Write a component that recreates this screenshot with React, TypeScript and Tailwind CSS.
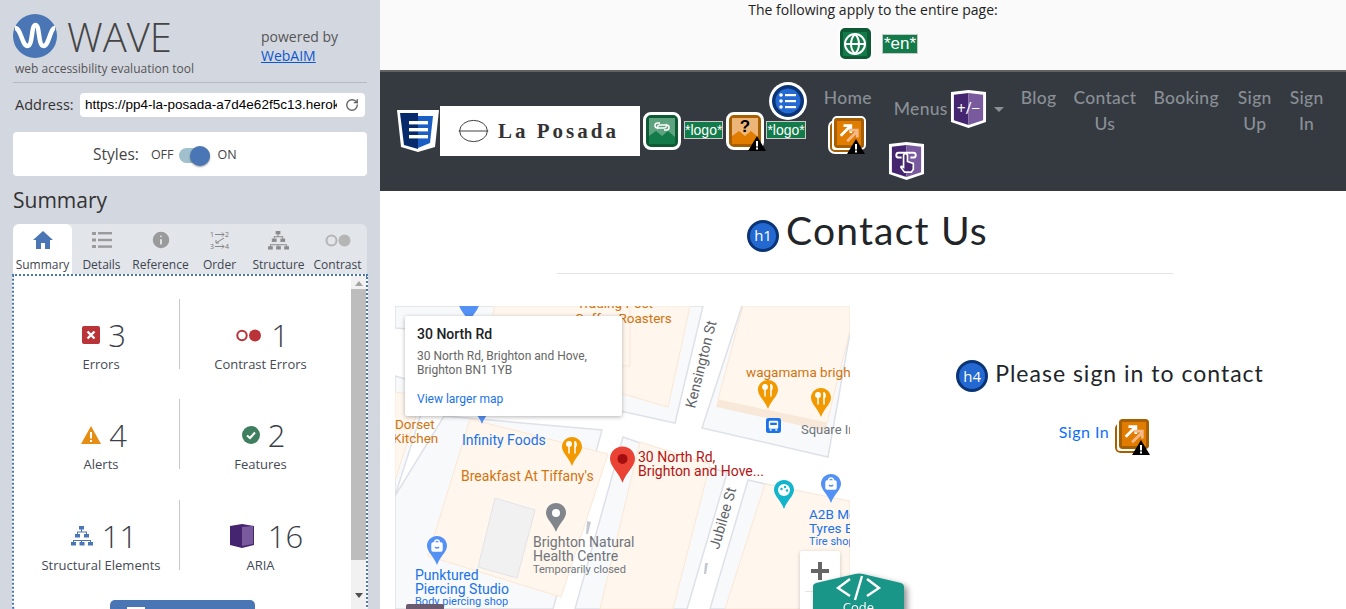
import React from "react";
import { RotateCw, Globe, Info } from "lucide-react";

const JOSEFIN = "font-['Lato',sans-serif]";

// small white-framed badge used by the WAVE overlay
function Frame({ bg, inner, children }: { bg: string; inner: string; children: React.ReactNode }) {
  return (
    <span className={`relative inline-flex h-[38px] w-[38px] shrink-0 items-center justify-center rounded-[8px] border-[3px] border-white ${bg}`}>
      <span className={`flex h-[26px] w-[26px] items-center justify-center ${inner}`}>{children}</span>
    </span>
  );
}

function WarnTri({ className }: { className: string }) {
  return (
    <svg viewBox="0 0 18 15" className={`absolute h-[15px] w-[18px] ${className}`}>
      <path d="M9 0 18 15H0Z" fill="#000" />
      <rect x="8" y="5" width="2" height="5.5" fill="#fff" />
      <rect x="8" y="11.5" width="2" height="2" fill="#fff" />
    </svg>
  );
}

function Shield({ size = 38, children }: { size?: number; children?: React.ReactNode }) {
  return (
    <svg viewBox="0 0 38 40" width={size} height={size * 40 / 38} className="shrink-0">
      <path d="M1 2 19 0 37 2V33L19 39 1 33Z" fill="#fff" />
      <path d="M4 5 19 3V36L4 31Z" fill="#45256f" />
      <path d="M19 3 34 5V31L19 36Z" fill="#7a5a9e" />
      {children}
    </svg>
  );
}

function Pin({ color, x, y, w = 20, h = 29, children }: { color: string; x: number; y: number; w?: number; h?: number; children?: React.ReactNode }) {
  return (
    <svg viewBox="0 0 20 29" className="absolute" width={w} height={h} style={{ left: x, top: y }}>
      <path d="M10 0C4.5 0 0 4.3 0 9.8 0 16 6.6 20 10 29 13.4 20 20 16 20 9.8 20 4.3 15.5 0 10 0Z" fill={color} />
      {children}
    </svg>
  );
}

const forkIcon = (
  <g stroke="#fff" strokeWidth="1.5" fill="none" strokeLinecap="round">
    <path d="M7 5v11" />
    <circle cx="7" cy="7" r="2.2" fill="#fff" />
    <path d="M13 5v11" />
    <path d="M13 5c1.6 1 1.6 4 0 5" />
  </g>
);

const bagIcon = (
  <g fill="none" stroke="#fff" strokeWidth="1.4">
    <rect x="5" y="7" width="10" height="8" rx="1" fill="#fff" />
    <path d="M7.5 7c0-4 5-4 5 0" />
    <path d="M8 11c1 1.4 3 1.4 4 0" stroke="#5491f5" />
  </g>
);

function MapLabel({ x, y, className, children }: { x: number; y: number; className: string; children: React.ReactNode }) {
  return (
    <div className={`absolute font-['Roboto',sans-serif] whitespace-nowrap ${className}`} style={{ left: x, top: y }}>
      {children}
    </div>
  );
}

function MapPanel() {
  return (
    <div className="relative h-[303px] w-[455px] shrink-0 overflow-hidden bg-white">
      <svg viewBox="0 0 455 303" className="absolute inset-0 h-full w-full">
        <g fill="#f8f9fb" stroke="#dfe1e8" strokeWidth="1.5">
          <path d="M49 110 207 124 158 303H0V190Z" />
          <path d="M347 0H455V27L433 151 307 122Z" />
          <path d="M225 0H308L280 117 225 105Z" />
          <path d="M228 131 332 167 292 303H180Z" />
          <path d="M353 174 455 197V303H315Z" />
          <path d="M0 0H100V30L0 22Z" />
          <path d="M0 70 35 80 0 190Z" />
        </g>
        <g fill="#fff6ee" stroke="#fbe7d4">
          <path d="M75 113 213 148 166 291 33 250Z" />
          <path d="M348 0H455V24L432 117 323 94Z" />
          <path d="M225 0H295L273 101 225 87Z" />
          <path d="M245 136 315 158 278 303H205Z" />
          <path d="M370 178 455 195V303H330Z" />
          <path d="M100 0H235V60H85Z" />
          <path d="M0 86 27 90 0 175Z" />
        </g>
        <path d="M323 94 432 117 431 125 321 101Z" fill="#f8e8d9" />
        <path d="M100 192 140 204 122 272 83 261Z" fill="#f1f1f1" stroke="#e2e3e6" />
        <path d="M192 215 196 216 193 228 191 228Z" fill="#c4c8d0" />
        <path d="M310 257 313 257 311 268 309 268Z" fill="#c4c8d0" />
      </svg>

      <Pin color="#5491f5" x={64} y={-12} />
      <Pin color="#5491f5" x={77} y={89} />
      <Pin color="#f29900" x={167} y={131}>{forkIcon}</Pin>
      <Pin color="#ea4335" x={215} y={140} w={25} h={37}>
        <circle cx="10" cy="10" r="4" fill="#a50e0e" />
      </Pin>
      <Pin color="#80868b" x={151} y={197}>
        <circle cx="10" cy="10" r="4" fill="#fff" />
      </Pin>
      <Pin color="#5491f5" x={32} y={230}>{bagIcon}</Pin>
      <Pin color="#f29900" x={363} y={74}>{forkIcon}</Pin>
      <Pin color="#f29900" x={416} y={82}>{forkIcon}</Pin>
      <Pin color="#12b5cb" x={379} y={174}>
        <circle cx="10" cy="10" r="6" fill="#fff" />
        <circle cx="7.5" cy="9" r="1.2" fill="#12b5cb" />
        <circle cx="11" cy="7" r="1.2" fill="#12b5cb" />
        <circle cx="13" cy="10.5" r="1.2" fill="#12b5cb" />
      </Pin>
      <Pin color="#5491f5" x={426} y={168}>{bagIcon}</Pin>
      <svg viewBox="0 0 16 16" className="absolute left-[371px] top-[112px] h-[15px] w-[15px]">
        <rect width="16" height="16" rx="2.5" fill="#1a73e8" />
        <rect x="3" y="3" width="10" height="8.5" rx="1.5" fill="#fff" />
        <rect x="4.5" y="5" width="7" height="2.5" fill="#1a73e8" />
        <rect x="4" y="12" width="2" height="1.5" fill="#fff" />
        <rect x="10" y="12" width="2" height="1.5" fill="#fff" />
      </svg>

      <MapLabel x={182} y={-10} className="text-[13.5px] leading-[14px] text-[#d0740f]">Trading Post</MapLabel>
      <MapLabel x={180} y={5} className="text-[13.5px] leading-[14px] text-[#d0740f]">Coffee Roasters</MapLabel>
      <MapLabel x={0} y={111} className="text-[13.5px] leading-[14px] text-[#d0740f]">Dorset</MapLabel>
      <MapLabel x={-2} y={125} className="text-[13.5px] leading-[14px] text-[#d0740f]">Kitchen</MapLabel>
      <MapLabel x={67} y={127} className="text-[14px] leading-[14px] text-[#1a73e8]">Infinity Foods</MapLabel>
      <MapLabel x={66} y={163} className="text-[14px] leading-[14px] text-[#d0740f]">Breakfast At Tiffany's</MapLabel>
      <MapLabel x={243} y={144} className="text-[14px] leading-[14px] text-[#b31412]">
        30 North Rd,<br />Brighton and Hove...
      </MapLabel>
      <MapLabel x={138} y={229} className="text-[14px] leading-[14px] text-[#70757a]">
        Brighton Natural<br />Health Centre
      </MapLabel>
      <MapLabel x={138} y={257} className="text-[11px] leading-[13px] text-[#70757a]">Temporarily closed</MapLabel>
      <MapLabel x={20} y={262} className="text-[14px] leading-[14px] text-[#1a73e8]">
        Punktured<br />Piercing Studio
      </MapLabel>
      <MapLabel x={20} y={289} className="text-[11px] leading-[13px] text-[#1a73e8]">Body piercing shop</MapLabel>
      <MapLabel x={351} y={59} className="text-[13.5px] leading-[14px] text-[#d0740f]">wagamama brighton</MapLabel>
      <MapLabel x={406} y={117} className="text-[13px] leading-[14px] text-[#70757a]">Square Inn</MapLabel>
      <MapLabel x={414} y={201} className="text-[13.5px] leading-[14px] text-[#1a73e8]">
        A2B Motors<br />Tyres Brighton
      </MapLabel>
      <MapLabel x={414} y={229} className="text-[11px] leading-[13px] text-[#1a73e8]">Tire shop</MapLabel>
      <MapLabel x={296} y={95} className="origin-left -rotate-[76deg] text-[14.5px] leading-[14px] text-[#5f6368]">Kensington St</MapLabel>
      <MapLabel x={320} y={236} className="origin-left -rotate-[74deg] text-[14.5px] leading-[14px] text-[#5f6368]">Jubilee St</MapLabel>

      {/* info window */}
      <div className="absolute left-[10px] top-[10px] flex h-[100px] w-[217px] flex-col rounded-[2px] bg-white px-3 pt-[10px] font-['Roboto',sans-serif] shadow-[0_1px_4px_rgba(0,0,0,0.3)]">
        <div className="text-[14px] font-medium leading-[16px] text-[#202124]">30 North Rd</div>
        <div className="mt-[7px] text-[12px] leading-[14px] text-[#666]">
          30 North Rd, Brighton and Hove,
          <br />
          Brighton BN1 1YB
        </div>
        <div className="mt-[15px] text-[12px] leading-[14px] text-[#1a73e8]">View larger map</div>
      </div>

      {/* zoom control */}
      <div className="absolute left-[405px] top-[245px] flex h-[80px] w-[40px] flex-col items-center rounded-[2px] bg-white shadow-[0_1px_4px_rgba(0,0,0,0.2)]">
        <svg viewBox="0 0 18 18" className="mt-[11px] h-[18px] w-[18px]">
          <path d="M7 0h4v7h7v4h-7v7H7v-7H0V7h7Z" fill="#666" />
        </svg>
        <div className="mt-[11px] h-px w-[30px] bg-[#e6e6e6]" />
      </div>

      <div className="absolute left-[11px] top-[298px] h-[10px] w-[38px] rounded-[2px] bg-[#6a5a70]" />
    </div>
  );
}

function Stat({ icon, n, label, gap, className }: { icon: React.ReactNode; n: string; label: string; gap: string; className: string }) {
  return (
    <div className={`flex h-[70px] flex-col items-center pt-[16px] ${className}`}>
      <div className={`flex h-[40px] shrink-0 items-center ${gap}`}>
        {icon}
        <span className="text-[31px] font-light leading-[40px] text-[#3a3f4a]">{n}</span>
      </div>
      <div className="whitespace-nowrap text-[13px] leading-[18px] text-[#444a55]">{label}</div>
    </div>
  );
}

function Tab({ icon, label, active }: { icon: React.ReactNode; label: string; active?: boolean }) {
  return (
    <div className={`flex h-[51px] w-[59px] shrink-0 flex-col items-center rounded-t-[6px] pt-[4px] ${active ? "bg-white" : ""}`}>
      <div className="flex h-[24px] items-center justify-center">{icon}</div>
      <div className="mt-[5px] whitespace-nowrap text-[12px] leading-[16px] text-[#3f4550]">{label}</div>
    </div>
  );
}

const treeIcon = (
  <>
    <rect x="8" y="0" width="5" height="3.5" /><rect x="4" y="8" width="5" height="3.5" /><rect x="13" y="8" width="5" height="3.5" />
    <rect x="0" y="16" width="5" height="3.5" /><rect x="8.5" y="16" width="5" height="3.5" /><rect x="17" y="16" width="5" height="3.5" />
    <path d="M10 3h1v2.5h5V8h-1V6.5H7V8H6V5.5h4ZM2 14h18v2h-1v-1h-8v1h-1v-1H3v1H2Z" />
  </>
);

function Sidebar() {
  return (
    <aside className="flex h-[609px] w-[380px] shrink-0 flex-col overflow-hidden bg-[#d3d7e0] pl-[13px] pr-[13px] font-['Open_Sans',sans-serif]">
      <div className="flex h-[83px] shrink-0 border-b border-[#b6b9bd]">
        <div className="w-[248px] shrink-0 pt-[14px]">
          <div className="flex h-[44px] items-center">
            <svg viewBox="0 0 44 44" className="h-[44px] w-[44px] shrink-0">
              <circle cx="22" cy="22" r="22" fill="#4a76b5" />
              <path d="M2 14C8 14 9 32 14.500 32 20 32 18 11 22.500 11 27 11 25 32 30.500 32 36 32 37 14 42 14" fill="none" stroke="#fff" strokeWidth="4.500" />
            </svg>
            <span className="ml-[10px] mt-[2px] font-['Open_Sans',sans-serif] text-[40px] font-light leading-[44px] text-[#444]">WAVE</span>
          </div>
          <div className="ml-[2px] mt-[2px] whitespace-nowrap text-[12px] leading-[18px] text-[#555]">web accessibility evaluation tool</div>
        </div>
        <div className="pt-[27px] text-[14px] leading-[19px] text-[#555]">
          <div>powered by</div>
          <div className="text-[#0b57d0] underline">WebAIM</div>
        </div>
      </div>

      <div className="mt-[10px] flex h-[24px] shrink-0 items-center pr-[2px]">
        <span className="ml-[2px] w-[65px] shrink-0 text-[14.5px] text-[#333]">Address:</span>
        <div className="flex h-[24px] flex-1 items-center rounded-[4px] bg-white pl-[5px] pr-[6px]">
          <span className="w-[252px] overflow-hidden whitespace-nowrap font-['Liberation_Sans',sans-serif] text-[13.5px] text-black">
            https://pp4-la-posada-a7d4e62f5c13.herokuapp.com
          </span>
          <RotateCw className="ml-auto h-[14px] w-[14px] text-[#666]" strokeWidth={2.4} />
        </div>
      </div>

      <div className="mt-[15px] flex h-[44px] shrink-0 items-center rounded-[4px] bg-white pl-[80px] pt-[2px]">
        <span className="text-[15.5px] text-[#444]">Styles:</span>
        <span className="ml-[12px] text-[12.5px] text-[#444]">OFF</span>
        <span className="relative ml-[5px] h-[15px] w-[31px] rounded-full bg-[#9fc0cc]">
          <span className="absolute -top-[2px] left-[11px] h-[20px] w-[20px] rounded-full bg-[#4a76b5] shadow-[0_1px_2px_rgba(0,0,0,0.4)]" />
        </span>
        <span className="ml-[8px] text-[12.5px] text-[#444]">ON</span>
      </div>

      <h2 className="mt-[9px] shrink-0 text-[21px] leading-[30px] text-[#333]">Summary</h2>

      <div className="mt-[9px] flex h-[51px] shrink-0 rounded-t-[6px] bg-[#e2e5ea]">
        <Tab active label="Summary" icon={
          <svg viewBox="0 0 20 18" className="h-[18px] w-[20px]" fill="#4a76b5">
            <path d="M10 0 20 9H17V18H12V12H8V18H3V9H0Z" />
          </svg>} />
        <Tab label="Details" icon={
          <svg viewBox="0 0 20 16" className="h-[16px] w-[20px]" fill="#9a9a9a">
            <rect x="0" y="0" width="4" height="3" /><rect x="6" y="0" width="14" height="2.4" />
            <rect x="0" y="6.5" width="4" height="3" /><rect x="6" y="6.8" width="14" height="2.4" />
            <rect x="0" y="13" width="4" height="3" /><rect x="6" y="13.4" width="14" height="2.4" />
          </svg>} />
        <Tab label="Reference" icon={<Info className="h-[22px] w-[22px] fill-[#9a9a9a] text-[#e2e5ea]" strokeWidth={2} />} />
        <Tab label="Order" icon={
          <svg viewBox="0 0 20 19" className="h-[19px] w-[20px]" fill="none" stroke="#888" strokeWidth="1">
            <text x="0" y="6" fontSize="7" fill="#777" stroke="none">1</text>
            <text x="15" y="6" fontSize="7" fill="#777" stroke="none">2</text>
            <text x="0" y="18" fontSize="7" fill="#777" stroke="none">3</text>
            <text x="15" y="18" fontSize="7" fill="#777" stroke="none">4</text>
            <path d="M5 3.5h9M12 1.5l2 2-2 2M14 7 6 12M6 9v3h3M5 15.5h9M12 13.5l2 2-2 2" />
          </svg>} />
        <Tab label="Structure" icon={
          <svg viewBox="0 0 22 20" className="h-[19px] w-[21px]" fill="#8a8a8a">{treeIcon}</svg>} />
        <Tab label="Contrast" icon={
          <svg viewBox="0 0 26 13" className="h-[13px] w-[26px]">
            <circle cx="6.5" cy="6.5" r="5" fill="none" stroke="#b5b5b5" strokeWidth="2" />
            <circle cx="19.5" cy="6.5" r="6" fill="#b5b5b5" />
          </svg>} />
      </div>

      {/* scrolling summary panel */}
      <div className="-mx-px -mt-px flex h-[340px] shrink-0 rounded-b-[8px] border-2 border-dotted border-[#4a76b5] bg-white">
        <div className="flex min-w-0 flex-1 flex-col items-center pl-[9px] pr-[10px] pt-[23px]">
          <div className="flex w-full">
            <Stat className="w-[156px] shrink-0" gap="gap-[8px] pl-[6px]" n="3" label="Errors" icon={
              <svg viewBox="0 0 18 18" className="h-[18px] w-[18px]">
                <rect width="18" height="18" rx="2" fill="#b93338" />
                <path d="M5.5 5.5 12.5 12.5M12.5 5.5 5.5 12.5" stroke="#fff" strokeWidth="2.4" />
              </svg>} />
            <div className="h-[70px] w-px bg-[#c8c8c8]" />
            <Stat className="flex-1" gap="gap-[10px] pl-[4px]" n="1" label="Contrast Errors" icon={
              <svg viewBox="0 0 25 13" className="h-[13px] w-[25px]">
                <circle cx="6" cy="6.5" r="4.7" fill="none" stroke="#b93338" strokeWidth="2" />
                <circle cx="19" cy="6.5" r="6" fill="#b93338" />
              </svg>} />
          </div>
          <div className="mt-[30px] flex w-full">
            <Stat className="w-[156px] shrink-0" gap="gap-[8px] pl-[6px]" n="4" label="Alerts" icon={
              <svg viewBox="0 0 20 18" className="h-[18px] w-[20px]">
                <path d="M10 0 20 18H0Z" fill="#e58e13" />
                <rect x="9" y="6" width="2" height="6.5" fill="#fff" />
                <rect x="9" y="14" width="2" height="2" fill="#fff" />
              </svg>} />
            <div className="h-[70px] w-px bg-[#c8c8c8]" />
            <Stat className="flex-1" gap="gap-[8px] pl-[6px]" n="2" label="Features" icon={
              <svg viewBox="0 0 18 18" className="h-[18px] w-[18px]">
                <circle cx="9" cy="9" r="9" fill="#3f7f5f" />
                <path d="M5 9.5 8 12 13 6.5" fill="none" stroke="#fff" strokeWidth="2" />
              </svg>} />
          </div>
          <div className="mt-[31px] flex w-full">
            <Stat className="w-[156px] shrink-0" gap="gap-[9px] pl-[6px]" n="11" label="Structural Elements" icon={
              <svg viewBox="0 0 22 20" className="h-[20px] w-[22px]" fill="#4a76b5">{treeIcon}</svg>} />
            <div className="h-[70px] w-px bg-[#c8c8c8]" />
            <Stat className="flex-1" gap="gap-[14px] pl-[12px]" n="16" label="ARIA" icon={
              <svg viewBox="0 0 24 24" className="h-[24px] w-[24px]">
                <path d="M0 2 12 0 24 2V21L12 24 0 21Z" fill="#45256f" />
                <path d="M12 3 23 2V20L12 22Z" fill="#7a5a9e" />
              </svg>} />
          </div>
          <div className="mt-[30px] h-[40px] w-[145px] shrink-0 rounded-[5px] bg-[#4a76b5] pl-[17px] pt-[7px]">
            <div className="h-[6px] w-[18px] bg-white" />
          </div>
        </div>
        {/* scrollbar */}
        <div className="flex w-[15px] shrink-0 flex-col items-center bg-[#f1f1f1]">
          <span className="mt-[5px] h-0 w-0 border-x-[4px] border-b-[5px] border-x-transparent border-b-[#a3a3a3]" />
          <div className="mt-[3px] h-[271px] w-full bg-[#bdbdbd]" />
          <span className="mt-[33px] h-0 w-0 border-x-[4px] border-t-[5px] border-x-transparent border-t-[#505050]" />
        </div>
      </div>
    </aside>
  );
}

function Tag({ children, big }: { children: React.ReactNode; big?: boolean }) {
  return (
    <span className={`block shrink-0 border border-[#c9c9c9] bg-[#137a4a] font-['Liberation_Sans',sans-serif] text-white ${big ? "px-[1px] text-[17px] leading-[18px]" : "text-[14px] leading-[16px]"}`}>
      {children}
    </span>
  );
}

function LinkBadge({ className }: { className?: string }) {
  return (
    <span className={`relative block h-[38px] w-[38px] shrink-0 ${className ?? ""}`}>
      <span className="absolute left-[2px] top-[6px] h-[30px] w-[30px] rounded-[5px] border-[2px] border-[#a85f00] bg-white outline-2 outline-white" />
      <span className="absolute left-[6px] top-[2px] flex h-[30px] w-[30px] items-center justify-center rounded-[3px] border-[3px] border-[#a85f00] bg-[#e07c00] outline-2 outline-white">
        <svg viewBox="0 0 26 26" className="h-[24px] w-[24px]" fill="none" strokeWidth="3">
          <path d="M4 16 14 6M7 5h8v8" stroke="#fff" />
          <path d="M11 22 22 11M14 10h8v8" stroke="#f3b98a" />
        </svg>
      </span>
      <WarnTri className="bottom-0 right-[1px]" />
    </span>
  );
}

function NavItem({ lines, className }: { lines: string[]; className?: string }) {
  return (
    <div className={`text-center text-[17.5px] font-medium leading-[26px] tracking-[0.3px] text-[#8a8f96] ${JOSEFIN} ${className ?? ""}`}>
      {lines.map((l) => (
        <div key={l}>{l}</div>
      ))}
    </div>
  );
}

function TopNav() {
  return (
    <nav className="flex h-[121px] shrink-0 border-t-2 border-[#5f645f] bg-[#343a40] pl-[17px]">
      <div className="mt-[38px] shrink-0">
        <svg viewBox="0 0 42 42" className="h-[42px] w-[42px]">
          <path d="M0 0H42L38 37 21 42 4 37Z" fill="#fff" />
          <path d="M3 3H21V39L7 35Z" fill="#072a6b" />
          <path d="M21 6H36L33 33 21 38Z" fill="#1c5fc4" />
          <rect x="12" y="11" width="19" height="3.4" fill="#fff" />
          <rect x="12" y="18" width="19" height="3.4" fill="#fff" />
          <rect x="12" y="25" width="19" height="3.4" fill="#fff" />
        </svg>
      </div>
      <div className="ml-[1px] mt-[34px] flex h-[50px] w-[200px] shrink-0 items-center bg-white">
        <svg viewBox="0 0 34 26" className="ml-[17px] h-[24px] w-[33px]" fill="none" stroke="#333" strokeWidth="1">
          <ellipse cx="17" cy="13" rx="15" ry="11.5" />
          <path d="M1 13H33" />
        </svg>
        <span className="ml-[8px] whitespace-nowrap font-['Liberation_Serif',serif] text-[21px] font-bold leading-[26px] tracking-[3px] text-[#333]">La Posada</span>
      </div>
      <div className="ml-[3px] mt-[40px] self-start">
        <Frame bg="bg-[#0e5a34]" inner="bg-[#5da37f]">
          <svg viewBox="0 0 26 26" className="h-[26px] w-[26px]">
            <path d="M0 26V18L7 13 13 18 19 13 26 19V26Z" fill="#137a4a" />
            <path d="M11 5H8.5a2.5 2.5 0 0 0 0 5h7a2.5 2.5 0 0 0 1.5-4M15 12h2.5a2.500 2.500 0 0 0 0-5h-7a2.500 2.500 0 0 0-1.500 4" fill="none" stroke="#fff" strokeWidth="1.5" />
          </svg>
        </Frame>
      </div>
      <div className="ml-[3px] mt-[49px] self-start"><Tag>*logo*</Tag></div>
      <div className="relative ml-[3px] mt-[40px] self-start">
        <Frame bg="bg-[#a85f00]" inner="bg-[#edb678]">
          <svg viewBox="0 0 26 26" className="h-[26px] w-[26px]">
            <path d="M0 26V18L7 13 13 18 19 13 26 19V26Z" fill="#e07c00" />
            <text x="13" y="14" textAnchor="middle" fontSize="17" fontWeight="700" fontFamily="Liberation Sans" fill="#000">?</text>
          </svg>
        </Frame>
        <WarnTri className="-bottom-[1px] -right-[2px]" />
      </div>
      <div className="relative ml-[2px] mt-[49px] self-start">
        <Tag>*logo*</Tag>
        <svg viewBox="0 0 38 38" className="absolute -top-[39px] left-[3px] h-[38px] w-[38px]">
          <circle cx="19" cy="19" r="19" fill="#fff" />
          <circle cx="19" cy="19" r="16" fill="#0a3476" />
          <circle cx="19" cy="19" r="12.5" fill="#2369d1" />
          <g fill="#fff">
            <circle cx="12" cy="13" r="1.8" /><rect x="16" y="12" width="11" height="2.2" />
            <circle cx="12" cy="19" r="1.8" /><rect x="16" y="18" width="11" height="2.2" />
            <circle cx="12" cy="25" r="1.8" /><rect x="16" y="24" width="11" height="2.2" />
          </g>
        </svg>
      </div>

      <div className="ml-[18px] mt-[13px] flex shrink-0 flex-col items-start self-start">
        <NavItem lines={["Home"]} />
        <LinkBadge className="ml-[4px] mt-[5px]" />
      </div>
      <div className="ml-[22px] mt-[18px] flex shrink-0 flex-col items-start self-start">
        <div className="flex items-center">
          <NavItem lines={["Menus"]} />
          <span className="ml-[2px]"><Shield size={37}>
            <text x="19" y="25" textAnchor="middle" fontSize="16" fontFamily="Open Sans" fill="#fff">+/−</text>
          </Shield></span>
          <span className="ml-[7px] h-0 w-0 border-x-[5px] border-t-[5px] border-x-transparent border-t-[#8a8f96]" />
        </div>
        <div className="-ml-[6px] mt-[13px]">
          <Shield size={37}>
            <path d="M11 11h15a2 2 0 0 1 0 5h-3M11 11a2 2 0 0 0 0 5h3" fill="none" stroke="#fff" strokeWidth="2" />
            <path d="M16 14v12l-2-1c-1 0-1 1 0 2l3 4h7l2-3v-6l-3-1-3-1v-6a2 2 0 0 0-4 0Z" fill="#45256f" stroke="#fff" strokeWidth="1.7" />
          </Shield>
        </div>
      </div>
      <NavItem lines={["Blog"]} className="ml-[17px] mt-[13px] self-start" />
      <NavItem lines={["Contact", "Us"]} className="ml-[17px] mt-[13px] self-start" />
      <NavItem lines={["Booking"]} className="ml-[17px] mt-[13px] self-start" />
      <NavItem lines={["Sign", "Up"]} className="ml-[19px] mt-[13px] self-start" />
      <NavItem lines={["Sign", "In"]} className="ml-[18px] mt-[13px] self-start" />
    </nav>
  );
}

function HeadBadge({ label }: { label: string }) {
  return (
    <span className="flex h-[32px] w-[32px] shrink-0 items-center justify-center rounded-full border-[3px] border-[#0a3476] bg-[#2369d1] font-['Open_Sans',sans-serif] text-[15px] leading-none text-white">
      {label}
    </span>
  );
}

export default function App() {
  return (
    <div className="relative flex h-[609px] w-[1346px] overflow-hidden bg-white">
      <Sidebar />
      <main className="flex min-w-0 flex-1 flex-col">
        <div className="flex h-[70px] shrink-0 flex-col items-center bg-[#fafafa] pl-[20px] font-['Open_Sans',sans-serif]">
          <div className="text-[14px] leading-[19px] text-[#222]">The following apply to the entire page:</div>
          <div className="ml-[10px] mt-[7px] flex items-center gap-[9px]">
            <span className="flex h-[35px] w-[35px] items-center justify-center rounded-[7px] border-[2px] border-white bg-[#0e5a34]">
              <span className="flex h-[24px] w-[24px] items-center justify-center bg-[#137a4a]">
                <Globe className="h-[24px] w-[24px] text-white" strokeWidth={2} />
              </span>
            </span>
            <Tag big>*en*</Tag>
          </div>
        </div>
        <TopNav />

        <div className="mt-[16px] flex shrink-0 items-center justify-center pl-[9px]">
          <span className="mt-[11px]"><HeadBadge label="h1" /></span>
          <h1 className={`ml-[7px] text-[39px] font-normal leading-[46px] tracking-[1.2px] text-[#212529] ${JOSEFIN}`}>Contact Us</h1>
        </div>
        <div className="ml-[177px] mt-[20px] h-px w-[616px] shrink-0 bg-[#e3e3e3]" />

        <div className="mt-[32px] flex min-h-0 flex-1 pl-[15px]">
          <MapPanel />
          <div className="flex flex-1 flex-col items-center pl-[24px] pt-[54px]">
            <div className="flex items-center">
              <HeadBadge label="h4" />
              <h4 className={`ml-[7px] -translate-y-[3px] text-[23px] font-normal leading-[32px] tracking-[1px] text-[#212529] ${JOSEFIN}`}>Please sign in to contact</h4>
            </div>
            <div className="ml-[-10px] mt-[25px] flex items-center">
              <span className={`mr-[4px] -translate-y-[4px] text-[16px] tracking-[0.5px] text-[#0d6efd] ${JOSEFIN}`}>Sign In</span>
              <LinkBadge />
            </div>
          </div>
        </div>
      </main>

      {/* WAVE code toggle */}
      <div className="absolute left-[813px] top-[573px] h-[44px] w-[91px] drop-shadow-[3px_3px_3px_rgba(0,0,0,0.45)]">
        <svg viewBox="0 0 91 44" className="absolute inset-0 h-full w-full">
          <path d="M0 13Q0 11 3 10L42 1Q46 0 50 1L88 10Q91 11 91 14V44H0Z" fill="#1a9688" />
          <path d="M37 6 25 15 37 23M54 6 66 15 54 23M49 3 42 27" fill="none" stroke="#fff" strokeWidth="2.4" />
        </svg>
        <span className="absolute left-0 right-0 top-[26px] text-center font-['Open_Sans',sans-serif] text-[13px] leading-[16px] text-white">Code</span>
      </div>
    </div>
  );
}
